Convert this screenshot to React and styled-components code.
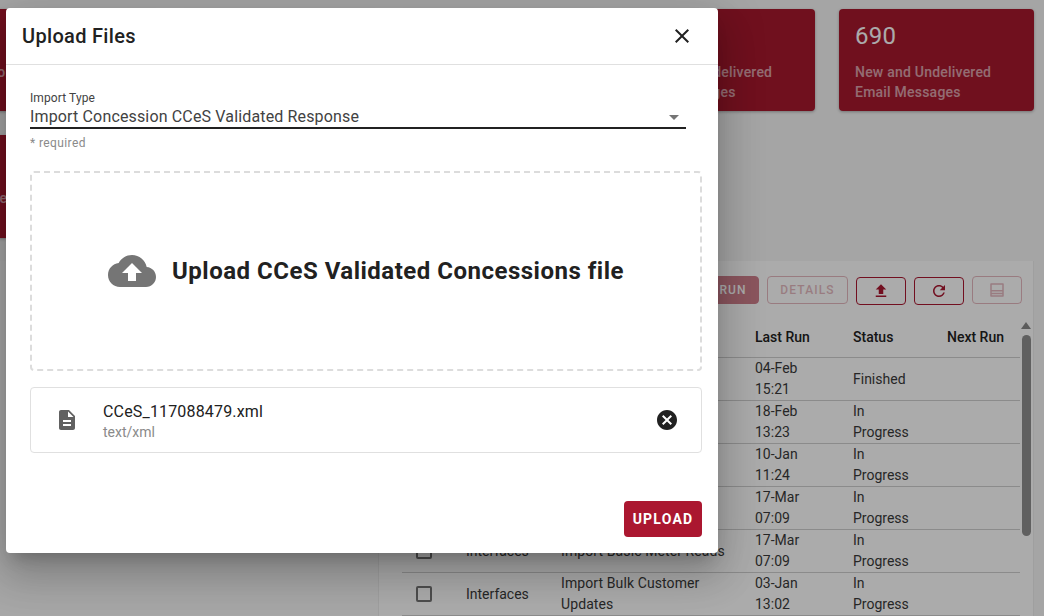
import styled, { createGlobalStyle } from "styled-components";

const RED = "#ab1730";

const GlobalStyle = createGlobalStyle`
  html, body {
    margin: 0;
    padding: 0;
    height: 100%;
    overflow: hidden;
    background: #f6f6f6;
    font-family: Roboto, "Liberation Sans", sans-serif;
    color: #212121;
  }
  * {
    box-sizing: border-box;
  }
`;

const Page = styled.div`
  position: relative;
  width: 1044px;
  height: 616px;
  overflow: hidden;
`;

const CardGrid = styled.div`
  display: flex;
  flex-wrap: wrap;
  gap: 24px;
  width: 1071px;
  margin-left: -37px;
  padding-top: 9px;
`;

const Card = styled.div`
  width: 195px;
  height: ${(p) => (p.$tall ? 103 : 102)}px;
  padding: 11px 16px;
  border-radius: 4px;
  background: #a8182e;
  color: #fff;
  box-shadow: 0 1px 3px rgba(0, 0, 0, 0.3);
`;

const CardCount = styled.div`
  height: 32px;
  font-size: 24px;
  line-height: 32px;
  letter-spacing: 0.2px;
`;

const CardLabel = styled.div`
  margin-top: 10px;
  font-size: 14px;
  font-weight: 500;
  line-height: 20px;
  letter-spacing: 0.22px;
  opacity: 0.6;
`;

const Main = styled.div`
  display: flex;
  margin-top: 23px;
  height: 355px;
`;

const SidePanel = styled.div`
  width: 379px;
  background: #fafafa;
  border-right: 1px solid #eee;
`;

const JobsPanel = styled.section`
  width: 655px;
  padding: 15px 11px 0 23px;
  background: #fff;
  border-right: 1px solid #eee;
`;

const Toolbar = styled.div`
  display: flex;
  justify-content: flex-end;
  align-items: flex-start;
  gap: 8px;
  height: 28px;
`;

const ToolButton = styled.button`
  display: flex;
  align-items: center;
  justify-content: center;
  width: ${(p) => p.$width}px;
  height: 28px;
  margin-top: ${(p) => (p.$enabled ? 1 : 0)}px;
  padding: 0;
  border: 1px solid ${RED};
  border-radius: 4px;
  background: ${(p) => (p.$filled ? RED : "transparent")};
  color: ${(p) => (p.$filled ? "#fff" : RED)};
  opacity: ${(p) => (p.$enabled ? 1 : p.$filled ? 0.55 : 0.3)};
  font-family: inherit;
  font-size: 12px;
  font-weight: 500;
  letter-spacing: 1.1px;
`;

const Jobs = styled.div`
  display: flex;
  margin-top: 11px;
`;

const JobsTable = styled.div`
  width: 618px;
`;

const Row = styled.div`
  display: grid;
  grid-template-columns: 64px 95px 194px 98px 94px 73px;
  align-items: center;
  height: 43px;
  padding: ${(p) => (p.$head ? "2px 0 0" : "0 0 1px")};
  border-bottom: 1px solid #d0d0d0;
  font-size: 14px;
  font-weight: ${(p) => (p.$head ? 500 : 400)};
  line-height: 21px;
  color: ${(p) => (p.$head ? "#212121" : "#3a3a3a")};
`;

const Check = styled.span`
  display: block;
  width: 16px;
  height: 16px;
  margin-left: 14px;
  border: 2px solid #757575;
  border-radius: 2px;
`;

const JobName = styled.span`
  max-width: 170px;
  letter-spacing: 0.1px;
`;

const ScrollTrack = styled.div`
  display: flex;
  flex-direction: column;
  align-items: center;
  width: 11px;
  margin-left: 1px;
`;

const ScrollUp = styled.span`
  width: 0;
  height: 0;
  margin-top: 7px;
  border-left: 5px solid transparent;
  border-right: 5px solid transparent;
  border-bottom: 7px solid #8a8a8a;
`;

const ScrollThumb = styled.span`
  width: 9px;
  height: 201px;
  margin-top: 6px;
  border-radius: 5px;
  background: #8f8f8f;
`;

const Scrim = styled.div`
  position: absolute;
  inset: 0;
  background: rgba(0, 0, 0, 0.33);
`;

const Modal = styled.div`
  position: absolute;
  left: 6px;
  top: 8px;
  width: 712px;
  height: 545px;
  display: flex;
  flex-direction: column;
  border-radius: 4px;
  background: #fff;
  box-shadow: 0 11px 15px -7px rgba(0, 0, 0, 0.2), 0 24px 38px 3px rgba(0, 0, 0, 0.14),
    0 9px 46px 8px rgba(0, 0, 0, 0.12);
`;

const ModalHeader = styled.header`
  display: flex;
  align-items: center;
  justify-content: space-between;
  height: 57px;
  padding: 0 24px 1px 16px;
  border-bottom: 1px solid #e0e0e0;
`;

const ModalTitle = styled.h2`
  margin: 0;
  font-size: 20px;
  font-weight: 500;
  letter-spacing: 0.32px;
  color: #212121;
`;

const IconSlot = styled.svg`
  display: block;
  flex: none;
  width: ${(p) => p.$size || 24}px;
  height: ${(p) => p.$size || 24}px;
  fill: ${(p) => p.$color || "currentColor"};
`;

const ModalBody = styled.div`
  flex: 1;
  display: flex;
  flex-direction: column;
  padding: 26px 16px 16px 24px;
`;

const FieldLabel = styled.label`
  display: block;
  height: 14px;
  font-size: 12px;
  line-height: 14px;
  letter-spacing: 0.1px;
  color: #424242;
`;

const SelectBox = styled.div`
  display: flex;
  align-items: center;
  justify-content: space-between;
  width: 656px;
  height: 24px;
  border-bottom: 2px solid #212121;
  font-size: 16px;
  letter-spacing: 0.15px;
  color: #424242;
`;

const SelectArrow = styled.span`
  width: 0;
  height: 0;
  margin: 2px 7px 0 0;
  border-left: 5px solid transparent;
  border-right: 5px solid transparent;
  border-top: 5px solid #757575;
`;

const HelperText = styled.div`
  margin-top: 7px;
  font-size: 12px;
  line-height: 14px;
  letter-spacing: 0.4px;
  color: #8a8a8a;
`;

const DropZone = styled.div`
  display: flex;
  align-items: center;
  justify-content: center;
  gap: 16px;
  width: 672px;
  height: 200px;
  margin-top: 21px;
  border: 2px dashed #dcdcdc;
  border-radius: 4px;
`;

const DropText = styled.span`
  font-size: 24px;
  font-weight: 700;
  letter-spacing: 0.5px;
  color: #212121;
`;

const FileRow = styled.div`
  display: flex;
  align-items: center;
  width: 672px;
  height: 66px;
  margin-top: 16px;
  padding: 0 22px 0 24px;
  border: 1px solid #e0e0e0;
  border-radius: 4px;
`;

const FileInfo = styled.div`
  flex: 1;
  margin-left: 24px;
`;

const FileName = styled.div`
  margin-top: -1px;
  font-size: 16px;
  line-height: 24px;
  letter-spacing: 0.17px;
  color: #212121;
`;

const FileType = styled.div`
  font-size: 14px;
  line-height: 16px;
  color: #8a8a8a;
`;

const ModalActions = styled.div`
  display: flex;
  justify-content: flex-end;
  width: 672px;
  margin-top: auto;
`;

const UploadButton = styled.button`
  width: 78px;
  height: 36px;
  padding: 0;
  border: 0;
  border-radius: 4px;
  background: ${RED};
  color: #fff;
  font-family: inherit;
  font-size: 14px;
  font-weight: 700;
  letter-spacing: 1.2px;
`;

const icons = {
  close: "M19 6.41L17.59 5 12 10.59 6.41 5 5 6.41 10.59 12 5 17.59 6.41 19 12 13.41 17.59 19 19 17.59 13.41 12z",
  cloud:
    "M19.35 10.04C18.67 6.59 15.64 4 12 4 9.11 4 6.6 5.64 5.35 8.04 2.34 8.36 0 10.91 0 14c0 3.31 2.69 6 6 6h13c2.76 0 5-2.24 5-5 0-2.64-2.05-4.78-4.65-4.96zM14 13v4h-4v-4H7l5-5 5 5h-3z",
  file: "M14 2H6c-1.1 0-1.99.9-1.99 2L4 20c0 1.1.89 2 1.99 2H18c1.1 0 2-.9 2-2V8l-6-6zm2 16H8v-2h8v2zm0-4H8v-2h8v2zm-3-5V3.5L18.5 9H13z",
  cancel:
    "M12 2C6.47 2 2 6.47 2 12s4.47 10 10 10 10-4.47 10-10S17.53 2 12 2zm5 13.59L15.59 17 12 13.41 8.41 17 7 15.59 10.59 12 7 8.41 8.41 7 12 10.59 15.59 7 17 8.41 13.41 12 17 15.59z",
  upload: "M9 16h6v-6h4l-7-7-7 7h4zm-4 2h14v2H5z",
  refresh:
    "M17.65 6.35C16.2 4.9 14.21 4 12 4c-4.42 0-7.99 3.58-7.99 8s3.57 8 7.99 8c3.73 0 6.84-2.55 7.73-6h-2.08c-.82 2.33-3.04 4-5.65 4-3.31 0-6-2.69-6-6s2.69-6 6-6c1.66 0 3.14.69 4.22 1.78L13 11h7V4l-2.35 2.35z",
  panel: "M4 3h16c.6 0 1 .4 1 1v16c0 .6-.4 1-1 1H4c-.6 0-1-.4-1-1V4c0-.6.4-1 1-1zm1 2v7h14V5H5zm0 9v1.500h14V14H5zm0 3.500V19h14v-1.500H5z",
};

const Icon = ({ name, size, color }) => (
  <IconSlot viewBox="0 0 24 24" $size={size} $color={color}>
    <path d={icons[name]} />
  </IconSlot>
);

const cards = [
  { count: "", label: "Error Messages" },
  { count: "", label: "" },
  { count: "", label: "" },
  { count: "", label: "New and Undelivered SMS Messages" },
  { count: "690", label: "New and Undelivered Email Messages" },
  { count: "", label: "Late Runs", tall: true },
];

const jobs = [
  { type: "", name: "", lastRun: ["04-Feb", "15:21"], status: ["Finished"] },
  { type: "", name: "", lastRun: ["18-Feb", "13:23"], status: ["In", "Progress"] },
  { type: "", name: "", lastRun: ["10-Jan", "11:24"], status: ["In", "Progress"] },
  { type: "", name: "", lastRun: ["17-Mar", "07:09"], status: ["In", "Progress"] },
  { type: "Interfaces", name: "Import Basic Meter Reads", lastRun: ["17-Mar", "07:09"], status: ["In", "Progress"] },
  { type: "Interfaces", name: "Import Bulk Customer Updates", lastRun: ["03-Jan", "13:02"], status: ["In", "Progress"] },
];

const Lines = ({ items }) => items.map((line) => <div key={line}>{line}</div>);

const App = () => {
  return (
    <Page>
      <GlobalStyle />
      <CardGrid>
        {cards.map((card, i) => (
          <Card key={i} $tall={card.tall}>
            <CardCount>{card.count}</CardCount>
            <CardLabel>{card.label}</CardLabel>
          </Card>
        ))}
      </CardGrid>
      <Main>
        <SidePanel />
        <JobsPanel>
          <Toolbar>
            <ToolButton $width={52} $filled>RUN</ToolButton>
            <ToolButton $width={81}>DETAILS</ToolButton>
            <ToolButton $width={50} $enabled><Icon name="upload" size={18} /></ToolButton>
            <ToolButton $width={50} $enabled><Icon name="refresh" size={18} /></ToolButton>
            <ToolButton $width={50}><Icon name="panel" size={18} /></ToolButton>
          </Toolbar>
          <Jobs>
            <JobsTable>
              <Row $head>
                <span />
                <span />
                <span />
                <span>Last Run</span>
                <span>Status</span>
                <span>Next Run</span>
              </Row>
              {jobs.map((job, i) => (
                <Row key={i}>
                  <Check />
                  <span>{job.type}</span>
                  <JobName>{job.name}</JobName>
                  <span><Lines items={job.lastRun} /></span>
                  <span><Lines items={job.status} /></span>
                  <span />
                </Row>
              ))}
            </JobsTable>
            <ScrollTrack>
              <ScrollUp />
              <ScrollThumb />
            </ScrollTrack>
          </Jobs>
        </JobsPanel>
      </Main>
      <Scrim />
      <Modal>
        <ModalHeader>
          <ModalTitle>Upload Files</ModalTitle>
          <Icon name="close" />
        </ModalHeader>
        <ModalBody>
          <FieldLabel>Import Type</FieldLabel>
          <SelectBox>
            Import Concession CCeS Validated Response
            <SelectArrow />
          </SelectBox>
          <HelperText>* required</HelperText>
          <DropZone>
            <Icon name="cloud" size={48} color="#757575" />
            <DropText>Upload CCeS Validated Concessions file</DropText>
          </DropZone>
          <FileRow>
            <Icon name="file" color="#616161" />
            <FileInfo>
              <FileName>CCeS_117088479.xml</FileName>
              <FileType>text/xml</FileType>
            </FileInfo>
            <Icon name="cancel" color="#212121" />
          </FileRow>
          <ModalActions>
            <UploadButton>UPLOAD</UploadButton>
          </ModalActions>
        </ModalBody>
      </Modal>
    </Page>
  );
};

export default App;
